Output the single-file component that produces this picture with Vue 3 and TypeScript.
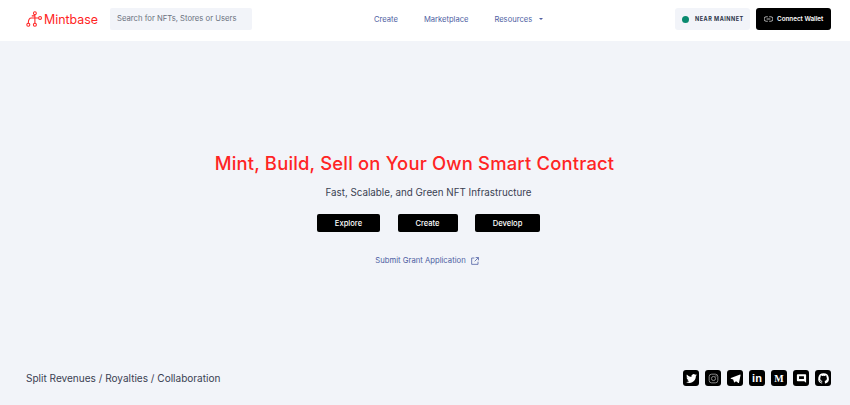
<template>
  <div class="page">
    <header class="topbar">
      <div class="left">
        <a class="logo">
          <svg class="logo-mark" viewBox="0 0 18 18" fill="none" stroke="#ff2424" stroke-width="1.2">
            <circle cx="10" cy="2.400" r="1.600" />
            <circle cx="15.800" cy="7.800" r="1.600" />
            <circle cx="2.600" cy="15.400" r="1.700" />
            <circle cx="10" cy="15.400" r="1.700" />
            <path d="M10 4v9.700M14.200 7.800H6C3.600 7.800 2.600 9.500 2.600 13.700M6.500 5.500H10" />
          </svg>
          <span>Mintbase</span>
        </a>
        <div class="search">Search for NFTs, Stores or Users</div>
      </div>
      <nav class="nav">
        <a>Create</a>
        <a>Marketplace</a>
        <a class="resources">Resources <i class="caret"></i></a>
      </nav>
      <div class="right">
        <div class="network"><i class="dot"></i>NEAR MAINNET</div>
        <button class="wallet">
          <svg viewBox="0 0 12 8" width="9" height="6" fill="none" stroke="#c9c9c9" stroke-width="1.2">
            <path d="M5 1H3a3 3 0 0 0 0 6h2M7 1h2a3 3 0 0 1 0 6H7M3.500 4h5" />
          </svg>
          Connect Wallet
        </button>
      </div>
    </header>

    <main class="hero">
      <h1>Mint, Build, Sell on Your Own Smart Contract</h1>
      <p class="sub">Fast, Scalable, and Green NFT Infrastructure</p>
      <div class="actions">
        <button v-for="a in actions" :key="a.label" :style="{ width: a.width + 'px' }">{{ a.label }}</button>
      </div>
      <a class="grant">
        Submit Grant Application
        <svg viewBox="0 0 12 12" width="8" height="8" fill="none" stroke="#4f5fa3" stroke-width="1.200">
          <path d="M5 1.500H1v9.500h9.500V7M7 .8h4.200V5M11 1 5.500 6.500" />
        </svg>
      </a>
    </main>

    <footer class="foot">
      <span class="tag">Split Revenues / Royalties / Collaboration</span>
      <div class="socials">
        <a v-for="s in socials" :key="s.name" class="social" :title="s.name">
          <svg v-if="s.name === 'twitter'" viewBox="0 0 24 24" fill="#fff">
            <path d="M22 5.900a8 8 0 0 1-2.400.7 4.100 4.100 0 0 0 1.800-2.300 8.200 8.200 0 0 1-2.600 1 4.100 4.100 0 0 0-7 3.700A11.600 11.600 0 0 1 3.400 4.700a4.100 4.100 0 0 0 1.300 5.500 4 4 0 0 1-1.900-.5 4.100 4.100 0 0 0 3.300 4 4.100 4.100 0 0 1-1.900.1 4.100 4.100 0 0 0 3.800 2.900A8.200 8.200 0 0 1 2 18.400 11.600 11.600 0 0 0 8.300 20.200c7.500 0 11.700-6.300 11.700-11.700v-.5A8.300 8.300 0 0 0 22 5.900z" />
          </svg>
          <svg v-else-if="s.name === 'instagram'" viewBox="0 0 24 24" fill="none" stroke="#9a9a9a" stroke-width="1.600">
            <rect x="4" y="4" width="16" height="16" rx="4.500" />
            <circle cx="12" cy="12" r="3.800" />
            <circle cx="16.600" cy="7.400" r=".5" />
          </svg>
          <svg v-else-if="s.name === 'telegram'" viewBox="0 0 24 24" fill="#fff">
            <path d="M20.500 4.500 3.500 11.300c-.7.300-.7 1 0 1.200l4.200 1.300 1.700 5c.2.500.8.600 1.200.3l2.400-2 4.300 3.100c.5.300 1.100.1 1.200-.5l2.900-14.300c.1-.3-.2-.5-.4-.4z" />
          </svg>
          <span v-else-if="s.name === 'linkedin'" class="li">in</span>
          <span v-else-if="s.name === 'medium'" class="md">M</span>
          <svg v-else-if="s.name === 'discord'" viewBox="0 0 24 24" fill="#fff">
            <path fill-rule="evenodd" d="M5 4h14a1.500 1.500 0 0 1 1.500 1.500V20l-3.500-3H5a1.500 1.500 0 0 1-1.500-1.500v-10A1.500 1.500 0 0 1 5 4zm2.500 4v5h9V8z" />
          </svg>
          <svg v-else viewBox="0 0 24 24" fill="#fff">
            <path d="M12 2.500a9.700 9.700 0 0 0-3.100 18.900c.5.100.7-.2.700-.5v-1.700c-2.700.6-3.300-1.300-3.300-1.300-.4-1.100-1.100-1.400-1.100-1.400-.9-.6.100-.6.100-.6 1 .1 1.500 1 1.500 1 .9 1.500 2.300 1.100 2.900.8.100-.6.300-1.100.6-1.300-2.200-.2-4.400-1.100-4.400-4.800 0-1.100.4-1.900 1-2.600-.1-.2-.4-1.200.1-2.600 0 0 .8-.3 2.700 1a9.300 9.300 0 0 1 4.800 0c1.900-1.300 2.700-1 2.700-1 .5 1.400.2 2.400.1 2.600.6.700 1 1.500 1 2.600 0 3.700-2.300 4.600-4.400 4.800.4.300.7.900.7 1.800v2.700c0 .3.200.6.700.5A9.700 9.700 0 0 0 12 2.500z" />
          </svg>
        </a>
      </div>
    </footer>
  </div>
</template>

<script setup lang="ts">
const actions = [
  { label: 'Explore', width: 63 },
  { label: 'Create', width: 60 },
  { label: 'Develop', width: 65 }
];

const socials = [
  { name: 'twitter' },
  { name: 'instagram' },
  { name: 'telegram' },
  { name: 'linkedin' },
  { name: 'medium' },
  { name: 'discord' },
  { name: 'github' }
];
</script>

<style>
html,
body {
  margin: 0;
  background: #f2f4f9;
}
</style>

<style scoped>
.page {
  height: 405px;
  display: flex;
  flex-direction: column;
  background: #f2f4f9;
  font-family: Inter, "Liberation Sans", sans-serif;
  overflow: hidden;
}

.topbar {
  height: 41px;
  flex: none;
  box-sizing: border-box;
  display: flex;
  align-items: center;
  padding: 0 19px 3px 26px;
  background: #fff;
}

.left,
.right,
.logo,
.network,
.wallet {
  display: flex;
  align-items: center;
}

.logo {
  width: 84px;
  gap: 2px;
  color: #ff2424;
  font-size: 12.400px;
}

.logo-mark {
  width: 16px;
  height: 18px;
  flex: none;
}

.search {
  width: 142px;
  height: 22px;
  box-sizing: border-box;
  padding-left: 7px;
  border-radius: 2px;
  background: #f2f4f9;
  color: #6b7280;
  font-size: 7.700px;
  line-height: 21px;
  white-space: nowrap;
}

.nav {
  display: flex;
  gap: 26px;
  margin-left: 122px;
  color: #4f5fa3;
  font-size: 7.600px;
}

.resources {
  display: flex;
  align-items: center;
  gap: 7px;
}

.caret {
  width: 0;
  height: 0;
  border-left: 2px solid transparent;
  border-right: 2px solid transparent;
  border-top: 2px solid #4f5fa3;
}

.right {
  margin-left: auto;
  gap: 6px;
}

.network {
  width: 75px;
  height: 22px;
  box-sizing: border-box;
  padding-left: 7px;
  gap: 6px;
  border-radius: 3px;
  background: #f2f4f9;
  color: #2b3348;
  font-size: 5.500px;
  font-weight: 700;
  letter-spacing: 0.5px;
  white-space: nowrap;
}

.dot {
  width: 7px;
  height: 7px;
  border-radius: 50%;
  background: #0a8a6f;
}

.wallet {
  width: 75px;
  height: 22px;
  padding: 0 0 0 8px;
  gap: 4px;
  border: 0;
  border-radius: 3px;
  background: #000;
  color: #fff;
  font: 600 6.300px Inter, "Liberation Sans", sans-serif;
  white-space: nowrap;
}

.hero {
  flex: 1;
  display: flex;
  flex-direction: column;
  align-items: center;
  padding: 108px 0 0 7px;
}

h1 {
  margin: 0 28px 0 0;
  color: #ff2424;
  font-size: 18.400px;
  font-weight: 500;
  letter-spacing: 0.19px;
  line-height: 28px;
  white-space: nowrap;
}

.sub {
  margin: 9px 0 0;
  color: #3a4152;
  font-size: 9.800px;
  line-height: 14px;
}

.actions {
  display: flex;
  gap: 17.500px;
  margin-top: 14px;
}

.actions button {
  height: 18px;
  padding: 0;
  border: 0;
  border-radius: 2px;
  background: #000;
  color: #fff;
  font: 500 7.600px Inter, "Liberation Sans", sans-serif;
}

.grant {
  display: flex;
  align-items: center;
  gap: 5px;
  margin: 23px 3px 0 0;
  color: #4f5fa3;
  font-size: 7.700px;
  line-height: 12px;
}

.foot {
  flex: none;
  height: 54px;
  box-sizing: border-box;
  display: flex;
  justify-content: space-between;
  align-items: center;
  padding: 0 19px 0 26px;
}

.tag {
  color: #3a4152;
  font-size: 10.050px;
}

.socials {
  display: flex;
  gap: 6px;
}

.social {
  width: 16px;
  height: 16px;
  display: flex;
  align-items: center;
  justify-content: center;
  border-radius: 3px;
  background: #000;
  color: #fff;
}

.social svg {
  width: 13px;
  height: 13px;
}

.li {
  font: 700 11px "Liberation Sans", sans-serif;
}

.md {
  font: 700 10px "Liberation Serif", serif;
}
</style>
